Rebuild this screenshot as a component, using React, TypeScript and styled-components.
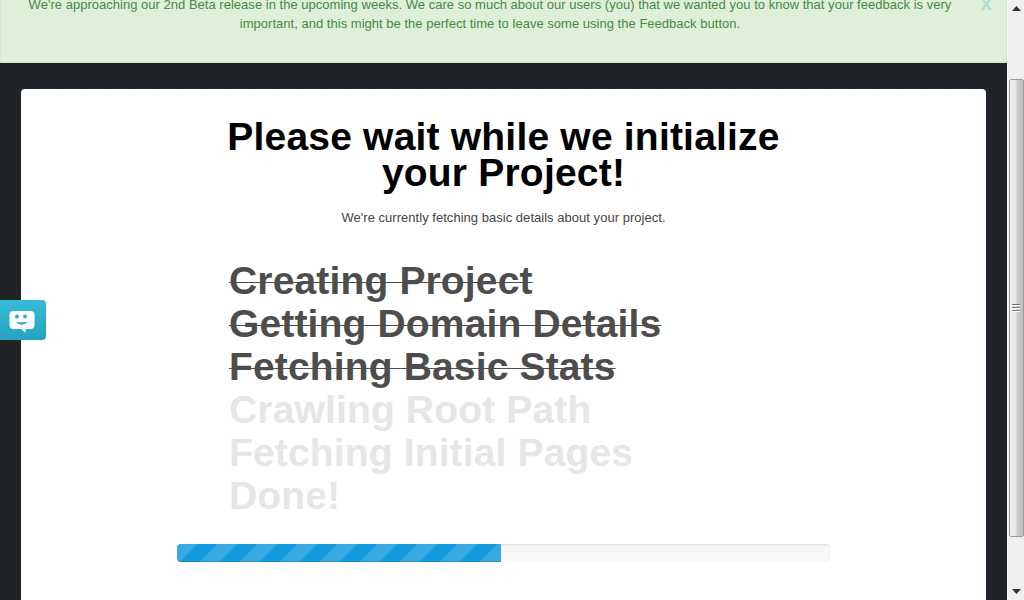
import React from "react";
import styled, { createGlobalStyle } from "styled-components";

const GlobalStyle = createGlobalStyle`
  html, body {
    margin: 0;
    padding: 0;
    height: 100%;
    overflow: hidden;
    font-family: "Liberation Sans", Arial, sans-serif;
  }
`;

const Page = styled.div`
  position: relative;
  display: flex;
  width: 1024px;
  height: 600px;
  overflow: hidden;
`;
const Main = styled.div`
  flex: 1;
  min-width: 0;
  overflow: hidden;
  background-color: #1f2327;
  background-image: radial-gradient(rgba(255, 255, 255, 0.025) 1px, transparent 1px);
  background-size: 3px 3px;
`;
const Banner = styled.div`
  position: relative;
  box-sizing: border-box;
  height: 68px;
  margin-top: -5px;
  padding: 0 37px 0 10px;
  background: #dff0d8;
  border: 1px solid #d6e9c6;
  border-top: 0;
  color: #468847;
  font-size: 13px;
  line-height: 19px;
  letter-spacing: 0.02px;
  text-align: center;
`;
const Close = styled.span`
  position: absolute;
  top: -3px;
  right: 14px;
  font-size: 20px;
  line-height: 22px;
  font-weight: bold;
  color: #b4dcd6;
`;
const Card = styled.div`
  margin: 26px 21px 0;
  height: 560px;
  padding-top: 30px;
  background: #fff;
  border-radius: 4px;
  display: flex;
  flex-direction: column;
  align-items: center;
`;
const Title = styled.h1`
  margin: 0;
  width: 600px;
  font-size: 39px;
  line-height: 36px;
  letter-spacing: 0.2px;
  font-weight: bold;
  color: #000;
  text-align: center;
`;
const Sub = styled.p`
  margin: 17px 0 0;
  font-size: 13px;
  line-height: 20px;
  letter-spacing: 0.03px;
  color: #444;
  text-align: center;
`;
const Steps = styled.ul`
  align-self: flex-start;
  list-style: none;
  margin: 31px 0 0 208px;
  padding: 0;
`;
const Step = styled.li<{ $done: boolean }>`
  font-size: 39px;
  line-height: 43px;
  letter-spacing: 0.15px;
  font-weight: bold;
  color: ${(p) => (p.$done ? "#4d4d4d" : "#e6e6e6")};
  text-decoration: ${(p) => (p.$done ? "line-through" : "none")};
  text-decoration-thickness: 1px;
  white-space: nowrap;
`;
const Progress = styled.div`
  align-self: flex-start;
  margin: 27px 0 0 156px;
  width: 653px;
  height: 18px;
  overflow: hidden;
  border-radius: 4px;
  background: linear-gradient(to bottom, #f5f5f5, #f9f9f9);
  box-shadow: inset 0 1px 2px rgba(0, 0, 0, 0.1);
`;
const Fill = styled.div`
  height: 100%;
  background-color: #149bdf;
  background-image: linear-gradient(
    135deg,
    rgba(255, 255, 255, 0.15) 25%,
    transparent 25%,
    transparent 50%,
    rgba(255, 255, 255, 0.15) 50%,
    rgba(255, 255, 255, 0.15) 75%,
    transparent 75%,
    transparent
  );
  background-size: 40px 40px;
  background-position: 23px -22px;
  box-shadow: inset 0 -1px 0 rgba(0, 0, 0, 0.15);
`;
const FeedbackTab = styled.div`
  position: absolute;
  left: 0;
  top: 300px;
  box-sizing: border-box;
  width: 46px;
  height: 40px;
  padding: 4px 0 0 9px;
  border-radius: 0 4px 4px 0;
  background: linear-gradient(to bottom, #36bbd6, #26a2bf);
  display: flex;
  align-items: center;
`;
const Scrollbar = styled.div`
  flex: none;
  width: 17px;
  display: flex;
  flex-direction: column;
  align-items: center;
  background: #f0f0f0;
  border-left: 1px solid #f7f7f7;
  box-sizing: border-box;
`;
const Arrow = styled.div`
  flex: none;
  width: 16px;
  height: 17px;
  display: flex;
  align-items: center;
  justify-content: center;
`;
const Thumb = styled.div`
  box-sizing: border-box;
  flex: none;
  width: 15px;
  height: 458px;
  margin-top: 62px;
  margin-bottom: auto;
  border: 1px solid #9a9a9a;
  border-radius: 2px;
  background: linear-gradient(to right, #f2f2f2, #e6e6e6 45%, #c8c8cc 60%, #bdbdc2);
  display: flex;
  align-items: center;
  justify-content: center;
`;

const SmileIcon: React.FC = () => (
  <svg width="26" height="24" viewBox="0 0 26 24">
    <path
      d="M4.5 1h17a4 4 0 0 1 4 4v10a4 4 0 0 1-4 4h-4.8l-.2 4-4-4H4.5a4 4 0 0 1-4-4V5a4 4 0 0 1 4-4z"
      fill="#fff"
    />
    <circle cx="8" cy="6.5" r="2" fill="#2badc8" />
    <circle cx="16" cy="6.5" r="2" fill="#2badc8" />
    <path d="M6.7 11.7Q12.7 13 19 11.7Q12.7 18 6.7 11.7z" fill="#2badc8" />
  </svg>
);

const ScrollArrow: React.FC<{ down?: boolean }> = ({ down }) => (
  <Arrow>
    <svg width="9" height="5" viewBox="0 0 9 5">
      <path d={down ? "M0 0h9L4.5 5z" : "M4.5 0L9 5H0z"} fill="#333" />
    </svg>
  </Arrow>
);

const Grip: React.FC = () => (
  <svg width="8" height="9" viewBox="0 0 8 9">
    <path d="M0 .5h8M0 3.5h8M0 6.5h8" stroke="#777" strokeWidth="1" />
    <path d="M0 1.5h8M0 4.5h8M0 7.5h8" stroke="#fff" strokeWidth="1" />
  </svg>
);

const steps = [
  { label: "Creating Project", done: true },
  { label: "Getting Domain Details", done: true },
  { label: "Fetching Basic Stats", done: true },
  { label: "Crawling Root Path", done: false },
  { label: "Fetching Initial Pages", done: false },
  { label: "Done!", done: false },
];

const App: React.FC = () => {
  return (
    <Page>
      <GlobalStyle />
      <Main>
        <Banner>
          We're approaching our 2nd Beta release in the upcoming weeks. We care so much about our users (you) that we
          wanted you to know that your feedback is very important, and this might be the perfect time to leave some
          using the Feedback button.
          <Close>x</Close>
        </Banner>
        <Card>
          <Title>
            Please wait while we initialize
            <br />
            your Project!
          </Title>
          <Sub>We're currently fetching basic details about your project.</Sub>
          <Steps>
            {steps.map((s) => (
              <Step key={s.label} $done={s.done}>
                {s.label}
              </Step>
            ))}
          </Steps>
          <Progress>
            <Fill style={{ width: `${(324 / 653) * 100}%` }} />
          </Progress>
        </Card>
      </Main>
      <Scrollbar>
        <ScrollArrow />
        <Thumb>
          <Grip />
        </Thumb>
        <ScrollArrow down />
      </Scrollbar>
      <FeedbackTab>
        <SmileIcon />
      </FeedbackTab>
    </Page>
  );
};

export default App;
